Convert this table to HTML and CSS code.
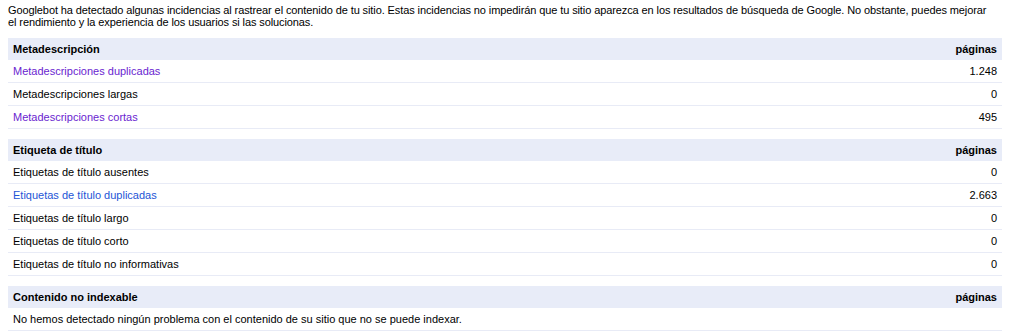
FILE: index.html
```html
<!DOCTYPE html>
<html lang="es">
<head>
<meta charset="utf-8">
<title>Mejoras HTML</title>
<link rel="stylesheet" href="styles.css">
</head>
<body>
<div class="page">
  <p class="intro">Googlebot ha detectado algunas incidencias al rastrear el contenido de tu sitio. Estas incidencias no impedirán que tu sitio aparezca en los resultados de búsqueda de Google. No obstante, puedes mejorar el rendimiento y la experiencia de los usuarios si las solucionas.</p>

  <table class="issues">
    <thead>
      <tr><th class="name">Metadescripción</th><th class="count">páginas</th></tr>
    </thead>
    <tbody>
      <tr><td class="name"><a class="visited" href="#">Metadescripciones duplicadas</a></td><td class="count">1.248</td></tr>
      <tr><td class="name">Metadescripciones largas</td><td class="count">0</td></tr>
      <tr><td class="name"><a class="visited" href="#">Metadescripciones cortas</a></td><td class="count">495</td></tr>
    </tbody>
  </table>

  <table class="issues">
    <thead>
      <tr><th class="name">Etiqueta de título</th><th class="count">páginas</th></tr>
    </thead>
    <tbody>
      <tr><td class="name">Etiquetas de título ausentes</td><td class="count">0</td></tr>
      <tr><td class="name"><a class="link" href="#">Etiquetas de título duplicadas</a></td><td class="count">2.663</td></tr>
      <tr><td class="name">Etiquetas de título largo</td><td class="count">0</td></tr>
      <tr><td class="name">Etiquetas de título corto</td><td class="count">0</td></tr>
      <tr><td class="name">Etiquetas de título no informativas</td><td class="count">0</td></tr>
    </tbody>
  </table>

  <table class="issues">
    <thead>
      <tr><th class="name">Contenido no indexable</th><th class="count">páginas</th></tr>
    </thead>
    <tbody>
      <tr><td class="name" colspan="2">No hemos detectado ningún problema con el contenido de su sitio que no se puede indexar.</td></tr>
    </tbody>
  </table>
</div>
</body>
</html>
```

FILE: styles.css
```css
html, body {
  margin: 0;
  padding: 0;
  background: #ffffff;
}

body {
  font-family: "Liberation Sans", Arial, Helvetica, sans-serif;
  font-size: 11px;
  color: #000000;
}

.page {
  padding: 4px 16px 0 8px;
}

.intro {
  margin: 0 8px 10px 0;
  line-height: 12px;
  letter-spacing: -0.1px;
}

.issues {
  width: 100%;
  border-collapse: collapse;
  margin-bottom: 10px;
}

.issues th {
  background: #e8ecf8;
  font-weight: bold;
  height: 22px;
  padding: 0 5px;
  vertical-align: middle;
}

.issues td {
  height: 22px;
  padding: 0 5px;
  vertical-align: middle;
  border-bottom: 1px solid #e8ebf6;
}

.issues .name {
  text-align: left;
}

.issues .count {
  text-align: right;
  white-space: nowrap;
}

.issues a {
  text-decoration: none;
}

.issues a.visited {
  color: #6a1ed0;
}

.issues a.link {
  color: #2355d6;
}
```
